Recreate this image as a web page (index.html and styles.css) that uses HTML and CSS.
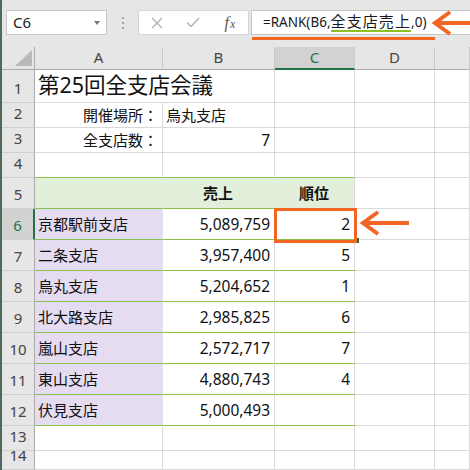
FILE: index.html
```html
<!DOCTYPE html>
<html lang="ja">
<head>
<meta charset="utf-8">
<title>RANK</title>
<link rel="stylesheet" href="styles.css">
</head>
<body>
<div class="app">
  <div class="toolbar">
    <div class="namebox"><span class="name">C6</span><span class="caret"></span></div>
    <div class="grip"><i></i><i></i><i></i></div>
    <div class="fbuttons">
      <span class="btn"><svg width="12" height="12" viewBox="0 0 12 12"><path d="M1 1 L11 11 M11 1 L1 11" stroke="#b3b3b3" stroke-width="1.4" fill="none"/></svg></span>
      <span class="btn"><svg width="14" height="11" viewBox="0 0 14 11"><path d="M1 5.5 L5 9.5 L13 1" stroke="#b3b3b3" stroke-width="1.5" fill="none"/></svg></span>
      <span class="btn fx">f<span class="fxx">x</span></span>
    </div>
    <div class="formula"><span class="ftext">=RANK(B6,<span class="ref">全支店売上</span>,0)</span></div>
    <div class="mark-line"></div>
    <svg class="arrow arrow-top" width="42" height="32" viewBox="0 0 42 32"><path d="M21 4 L6 15 L21 26" stroke="#f26522" stroke-width="4" fill="none"/><path d="M7 15 L42 15" stroke="#f26522" stroke-width="4"/></svg>
  </div>
  <div class="sheet">
    <div class="corner"></div>
    <div class="hd">A</div>
    <div class="hd">B</div>
    <div class="hd sel">C</div>
    <div class="hd">D</div>
    <div class="hd"></div>

    <div class="rh">1</div>
    <div class="c title nob">第25回全支店会議</div>
    <div class="c"></div>
    <div class="c"></div>
    <div class="c"></div>
    <div class="c"></div>

    <div class="rh">2</div>
    <div class="c r">開催場所：</div>
    <div class="c">烏丸支店</div>
    <div class="c"></div>
    <div class="c"></div>
    <div class="c"></div>

    <div class="rh">3</div>
    <div class="c r">全支店数：</div>
    <div class="c r num">7</div>
    <div class="c"></div>
    <div class="c"></div>
    <div class="c"></div>

    <div class="rh">4</div>
    <div class="c gb"></div>
    <div class="c gb"></div>
    <div class="c gb"></div>
    <div class="c"></div>
    <div class="c"></div>

    <div class="rh">5</div>
    <div class="c th gb"></div>
    <div class="c th gb ctr">売上</div>
    <div class="c th thc gb ctr">順位</div>
    <div class="c"></div>
    <div class="c"></div>

    <div class="rh sel">6</div>
    <div class="c nm gb">京都駅前支店</div>
    <div class="c r num gb">5,089,759</div>
    <div class="c r num gb">2</div>
    <div class="c"></div>
    <div class="c"></div>

    <div class="rh">7</div>
    <div class="c nm gb">二条支店</div>
    <div class="c r num gb">3,957,400</div>
    <div class="c r num gb">5</div>
    <div class="c"></div>
    <div class="c"></div>

    <div class="rh">8</div>
    <div class="c nm gb">烏丸支店</div>
    <div class="c r num gb">5,204,652</div>
    <div class="c r num gb">1</div>
    <div class="c"></div>
    <div class="c"></div>

    <div class="rh">9</div>
    <div class="c nm gb">北大路支店</div>
    <div class="c r num gb">2,985,825</div>
    <div class="c r num gb">6</div>
    <div class="c"></div>
    <div class="c"></div>

    <div class="rh">10</div>
    <div class="c nm gb">嵐山支店</div>
    <div class="c r num gb">2,572,717</div>
    <div class="c r num gb">7</div>
    <div class="c"></div>
    <div class="c"></div>

    <div class="rh">11</div>
    <div class="c nm gb">東山支店</div>
    <div class="c r num gb">4,880,743</div>
    <div class="c r num gb">4</div>
    <div class="c"></div>
    <div class="c"></div>

    <div class="rh">12</div>
    <div class="c nm gb">伏見支店</div>
    <div class="c r num gb">5,000,493</div>
    <div class="c r num gb"></div>
    <div class="c"></div>
    <div class="c"></div>

    <div class="rh">13</div>
    <div class="c"></div>
    <div class="c"></div>
    <div class="c"></div>
    <div class="c"></div>
    <div class="c"></div>

    <div class="rh">14</div>
    <div class="c"></div>
    <div class="c"></div>
    <div class="c"></div>
    <div class="c"></div>
    <div class="c"></div>
  </div>
  <div class="handle"></div>
  <div class="sel-box"></div>
  <svg class="arrow arrow-cell" width="54" height="30" viewBox="0 0 54 30"><path d="M20 3 L5 14 L20 25" stroke="#f26522" stroke-width="4" fill="none"/><path d="M6 14 L51 14" stroke="#f26522" stroke-width="4"/></svg>
</div>
</body>
</html>
```
FILE: styles.css
```css
* { box-sizing: border-box; margin: 0; padding: 0; }
html, body { width: 470px; height: 470px; overflow: hidden; background: #e6e6e6; }
body { font-family: "Noto Sans", "Noto Sans CJK JP", sans-serif; color: #111; }

.app {
  position: relative;
  width: 470px;
  height: 470px;
  overflow: hidden;
  border-left: 2px solid #4f6a58;
  background: #e6e6e6;
}

/* formula bar */
.toolbar {
  height: 47px;
  display: flex;
  align-items: flex-start;
  padding: 10px 0 0 4px;
}
.namebox {
  width: 101px;
  height: 25px;
  background: #fff;
  border: 1px solid #c6c6c6;
  display: flex;
  align-items: center;
  justify-content: space-between;
  padding: 0 6px 1px 6px;
  font-size: 15px;
  color: #222;
}
.caret {
  width: 0;
  height: 0;
  border-left: 3.5px solid transparent;
  border-right: 3.5px solid transparent;
  border-top: 4px solid #777;
  margin-top: 2px;
}
.grip {
  width: 31px;
  height: 25px;
  display: flex;
  flex-direction: column;
  align-items: center;
  justify-content: center;
  gap: 3px;
}
.grip i { display: block; width: 2px; height: 2px; background: #a6a6a6; }
.fbuttons {
  width: 111px;
  height: 25px;
  background: #fff;
  border: 1px solid #d6d6d6;
  display: flex;
  align-items: center;
  margin-right: 2px;
}
.btn {
  width: 36px;
  display: flex;
  align-items: center;
  justify-content: center;
}
.fx {
  font-family: "Liberation Serif", serif;
  font-style: italic;
  font-size: 16px;
  color: #555;
  padding-left: 2px;
}
.fxx { font-size: 12px; margin-left: 1px; margin-top: 3px; }
.formula {
  flex: 1;
  height: 25px;
  background: #fff;
  border: 1px solid #c6c6c6;
  margin-right: -10px;
  padding-left: 11px;
  display: flex;
  align-items: center;
  font-size: 13.5px;
  color: #1a1a1a;
  white-space: nowrap;
}
.ref {
  display: inline-block;
  font-size: 15px;
  letter-spacing: 1.1px;
  line-height: 17px;
  border-bottom: 2px solid #8cc21f;
}
.mark-line {
  position: absolute;
  left: 250px;
  top: 37px;
  width: 183px;
  height: 3px;
  background: #f26522;
}
.arrow { position: absolute; }
.arrow-top { left: 427px; top: 8px; }
.arrow-cell { left: 356px; top: 209px; }

/* sheet */
.sheet {
  display: grid;
  grid-template-columns: 33px 128px 112px 80px 80px 35px;
  grid-template-rows: 23px 33px 25px 25px 25px repeat(8, 31px) 25px 19px;
  background: #fff;
}
.corner {
  position: relative;
  background: #e6e6e6;
  border-right: 1px solid #ababab;
  border-bottom: 1px solid #ababab;
}
.corner::after {
  content: "";
  position: absolute;
  left: 13px;
  top: 3px;
  width: 17px;
  height: 16px;
  background: #b9b9b9;
  clip-path: polygon(100% 0, 100% 100%, 0 100%);
}
.hd {
  background: #e6e6e6;
  border-right: 1px solid #c8c8c8;
  border-bottom: 1px solid #ababab;
  display: flex;
  align-items: center;
  justify-content: center;
  font-size: 15px;
  color: #444;
  padding-bottom: 2px;
}
.hd.sel {
  background: #d2d2d2;
  border-bottom: 2px solid #217346;
  color: #217346;
}
.rh {
  background: #e6e6e6;
  border-right: 1px solid #ababab;
  border-bottom: 1px solid #cfcfcf;
  display: flex;
  align-items: flex-end;
  justify-content: center;
  font-size: 15px;
  line-height: 20px;
  padding-bottom: 4px;
  color: #444;
}
.rh.sel {
  background: #d2d2d2;
  border-right: 2px solid #217346;
  color: #217346;
}
.c {
  border-right: 1px solid #d9d9d9;
  border-bottom: 1px solid #d9d9d9;
  display: flex;
  align-items: center;
  padding: 0 4px 1px 3px;
  font-size: 15px;
  line-height: 20px;
  white-space: nowrap;
  color: #111;
}
.c.r { justify-content: flex-end; }
.c.ctr { justify-content: center; }
.c.nob { border-right-color: transparent; }
.title { font-size: 21.5px; line-height: 30px; align-items: flex-end; padding-bottom: 2px; }
.num { font-size: 15.5px; }
.c.gb { border-bottom-color: #8bc34a; }
.c.th { background: #e2efda; border-right-color: #e2efda; font-weight: bold; }
.c.th.thc { border-right-color: #d9d9d9; }
.c.nm { background: #e6dcf1; border-right-color: #e6dcf1; }

.sel-box {
  position: absolute;
  left: 272px;
  top: 208px;
  width: 83px;
  height: 35px;
  border: 3px solid #f26522;
}
.handle {
  position: absolute;
  left: 353px;
  top: 238px;
  width: 4px;
  height: 5px;
  background: #217346;
}
```
